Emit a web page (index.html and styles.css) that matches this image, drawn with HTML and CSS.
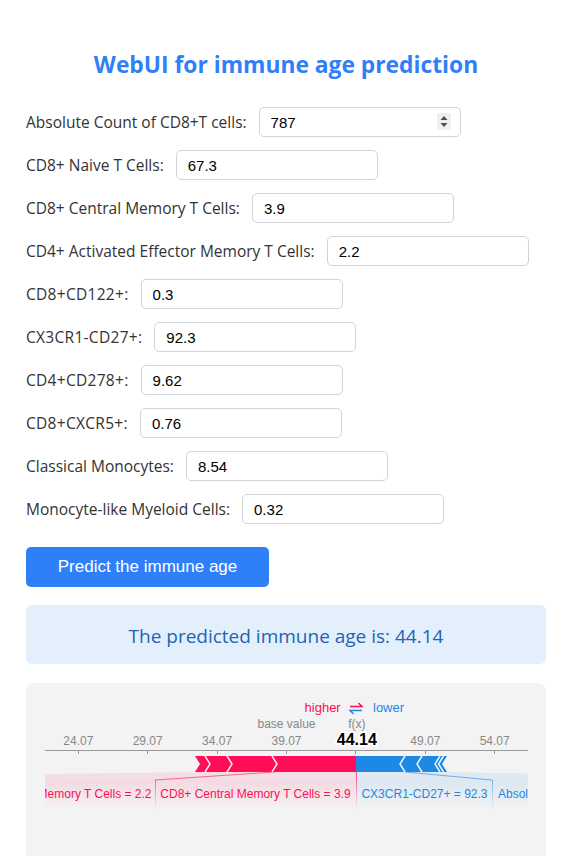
FILE: index.html
```html
<!DOCTYPE html>
<html lang="en">
<head>
<meta charset="utf-8">
<title>WebUI for immune age prediction</title>
<link rel="stylesheet" href="styles.css">
</head>
<body>
<main class="page">
  <h1 class="title">WebUI for immune age prediction</h1>
  <form class="form">
    <div class="row"><label class="label">Absolute Count of CD8+T cells:</label><div class="num"><input class="field" type="text" value="787"><svg class="spin" width="14" height="17" viewBox="0 0 14 17"><rect width="14" height="17" fill="#efefef"/><path d="M3.5 7 L7 3 L10.5 7 Z" fill="#505050"/><path d="M3.5 10 L10.5 10 L7 14 Z" fill="#505050"/></svg></div></div>
    <div class="row"><label class="label">CD8+ Naive T Cells:</label><input class="field" type="text" value="67.3"></div>
    <div class="row"><label class="label">CD8+ Central Memory T Cells:</label><input class="field" type="text" value="3.9"></div>
    <div class="row"><label class="label">CD4+ Activated Effector Memory T Cells:</label><input class="field" type="text" value="2.2"></div>
    <div class="row"><label class="label short">CD8+CD122+:</label><input class="field" type="text" value="0.3"></div>
    <div class="row"><label class="label short">CX3CR1-CD27+:</label><input class="field" type="text" value="92.3"></div>
    <div class="row"><label class="label short">CD4+CD278+:</label><input class="field" type="text" value="9.62"></div>
    <div class="row"><label class="label short">CD8+CXCR5+:</label><input class="field" type="text" value="0.76"></div>
    <div class="row"><label class="label">Classical Monocytes:</label><input class="field" type="text" value="8.54"></div>
    <div class="row"><label class="label">Monocyte-like Myeloid Cells:</label><input class="field" type="text" value="0.32"></div>
  </form>
  <button class="btn" type="button">Predict the immune age</button>
  <div class="result">The predicted immune age is: 44.14</div>
  <div class="plot">
    <svg class="force" width="520" height="173" viewBox="26 683 520 173" xmlns="http://www.w3.org/2000/svg" font-family="Liberation Sans, Arial, sans-serif">
      <defs>
        <linearGradient id="pinkFade" gradientUnits="userSpaceOnUse" x1="0" y1="779" x2="0" y2="809">
          <stop offset="0" stop-color="#ff0d57" stop-opacity="0.12"/>
          <stop offset="1" stop-color="#ff0d57" stop-opacity="0"/>
        </linearGradient>
        <linearGradient id="blueFade" gradientUnits="userSpaceOnUse" x1="0" y1="779" x2="0" y2="809">
          <stop offset="0" stop-color="#1e88e5" stop-opacity="0.12"/>
          <stop offset="1" stop-color="#1e88e5" stop-opacity="0"/>
        </linearGradient>
        <linearGradient id="pinkLine" gradientUnits="userSpaceOnUse" x1="0" y1="772" x2="0" y2="809">
          <stop offset="0" stop-color="#ff0d57" stop-opacity="0.7"/>
          <stop offset="1" stop-color="#ff0d57" stop-opacity="0"/>
        </linearGradient>
        <linearGradient id="blueLine" gradientUnits="userSpaceOnUse" x1="0" y1="772" x2="0" y2="809">
          <stop offset="0" stop-color="#1e88e5" stop-opacity="0.7"/>
          <stop offset="1" stop-color="#1e88e5" stop-opacity="0"/>
        </linearGradient>
        <clipPath id="plotClip"><rect x="45" y="683" width="483" height="173"/></clipPath>
      </defs>

      <text x="340.7" y="712" text-anchor="end" font-size="13" fill="#ff0d57">higher</text>
      <path d="M350 706.5 H362 L358.5 703" stroke="#ff0d57" stroke-width="1.5" fill="none"/>
      <path d="M362 710.5 H350 L353.5 714" stroke="#1e88e5" stroke-width="1.5" fill="none"/>
      <text x="373" y="712" font-size="13" fill="#1e88e5">lower</text>

      <text x="286.5" y="728" text-anchor="middle" font-size="12" fill="#888">base value</text>
      <text x="356.8" y="728" text-anchor="middle" font-size="12" fill="#888">f(x)</text>

      <line x1="45" x2="528" y1="750.5" y2="750.5" stroke="#999" stroke-width="1"/>
      <g stroke="#999" stroke-width="1">
        <line x1="78.5" x2="78.5" y1="750" y2="754"/>
        <line x1="147.5" x2="147.5" y1="750" y2="754"/>
        <line x1="217.5" x2="217.5" y1="750" y2="754"/>
        <line x1="286.5" x2="286.5" y1="750" y2="754"/>
        <line x1="355.5" x2="355.5" y1="750" y2="754"/>
        <line x1="425.5" x2="425.5" y1="750" y2="754"/>
        <line x1="494.5" x2="494.5" y1="750" y2="754"/>
      </g>
      <g font-size="12" fill="#888" text-anchor="middle">
        <text x="78.3" y="745">24.07</text>
        <text x="147.7" y="745">29.07</text>
        <text x="217.1" y="745">34.07</text>
        <text x="286.5" y="745">39.07</text>
        <text x="425.3" y="745">49.07</text>
        <text x="494.7" y="745">54.07</text>
      </g>
      <text x="356.8" y="745" text-anchor="middle" font-size="16" font-weight="bold" fill="#000" stroke="#fff" stroke-width="4" paint-order="stroke" stroke-linejoin="round">44.14</text>

      <g clip-path="url(#plotClip)">
        <g fill="#ff0d57" fill-opacity="0.09">
          <polygon points="275,772 356,772 356,780 155,780"/>
          <polygon points="229,772 275,772 155,780 -105,780"/>
          <polygon points="207,772 229,772 -105,780 -300,780"/>
          <polygon points="197,772 207,772 -300,780 -450,780"/>
        </g>
        <g fill="#1e88e5" fill-opacity="0.09">
          <polygon points="356,772 405,772 492,780 356,780"/>
          <polygon points="405,772 422,772 720,780 492,780"/>
          <polygon points="422,772 440,772 900,780 720,780"/>
        </g>
        <rect x="155" y="780" width="201" height="29" fill="url(#pinkFade)"/>
        <rect x="-105" y="780" width="260" height="29" fill="url(#pinkFade)"/>
        <rect x="356" y="780" width="136" height="29" fill="url(#blueFade)"/>
        <rect x="492" y="780" width="228" height="29" fill="url(#blueFade)"/>

        <path d="M275 772 L155 780" stroke="#ff0d57" stroke-opacity="0.6" stroke-width="1" fill="none"/>
        <path d="M155.5 780 V809" stroke="url(#pinkLine)" stroke-width="1" fill="none"/>
        <path d="M356.5 772 V809" stroke="url(#pinkLine)" stroke-width="1" fill="none"/>
        <path d="M405 772 L492 780" stroke="#1e88e5" stroke-opacity="0.6" stroke-width="1" fill="none"/>
        <path d="M492.5 780 V809" stroke="url(#blueLine)" stroke-width="1" fill="none"/>

        <g font-size="12">
          <text x="151.5" y="798" text-anchor="end" fill="#ff0d57">CD4+ Activated Effector Memory T Cells = 2.2</text>
          <text x="255.5" y="798" text-anchor="middle" fill="#ff0d57">CD8+ Central Memory T Cells = 3.9</text>
          <text x="424.5" y="798" text-anchor="middle" fill="#1e88e5">CX3CR1-CD27+ = 92.3</text>
          <text x="498" y="798" fill="#1e88e5">Absolute Count of CD8+T cells = 787</text>
        </g>
      </g>

      <polygon points="195,756 356,756 356,772 195,772 200,764" fill="#ff0d57"/>
      <g stroke="#fff" stroke-width="1.5" fill="none" stroke-opacity="0.9">
        <polyline points="205,756 210,764 205,772"/>
        <polyline points="227,756 232,764 227,772"/>
        <polyline points="272,756 277,764 272,772"/>
      </g>
      <polygon points="356,756 447,756 442,764 447,772 356,772" fill="#1e88e5"/>
      <g stroke="#fff" stroke-width="1.5" fill="none" stroke-opacity="0.9">
        <polyline points="405,756 400,764 405,772"/>
        <polyline points="422,756 417,764 422,772"/>
        <polyline points="440,756 435,764 440,772"/>
        <polyline points="443.5,756 438.5,764 443.5,772"/>
      </g>
    </svg>
  </div>
</main>
</body>
</html>
```
FILE: styles.css
```css
* {
  box-sizing: border-box;
}

html,
body {
  margin: 0;
  background: #ffffff;
}

body {
  font-family: "Open Sans", "Noto Sans", sans-serif;
  color: #333333;
}

.page {
  width: 520px;
  margin-left: 26px;
  padding-top: 49px;
}

.title {
  margin: 0 0 26px;
  font-size: 22.8px;
  line-height: 32px;
  font-weight: 700;
  color: #2f80f8;
  text-align: center;
}

.form {
  display: flex;
  flex-direction: column;
  gap: 13px;
}

.row {
  display: flex;
  align-items: center;
  gap: 12px;
  height: 30px;
}

.label {
  font-size: 15.5px;
  color: #333333;
  white-space: nowrap;
}

.label.short {
  letter-spacing: 0.3px;
}

.field {
  width: 202px;
  height: 30px;
  margin: 0;
  border: 1px solid #ced4da;
  border-radius: 5px;
  padding: 0 11px;
  font: 15px "Liberation Sans", Arial, sans-serif;
  color: #000000;
  background: #ffffff;
  outline: none;
}

.num {
  position: relative;
  display: flex;
}

.spin {
  position: absolute;
  right: 10px;
  top: 6px;
}

.btn {
  display: block;
  margin-top: 23px;
  width: 243px;
  height: 40px;
  padding: 0;
  border: 0;
  border-radius: 5px;
  background: #2f80f8;
  color: #ffffff;
  font: 17px "Liberation Sans", Arial, sans-serif;
}

.result {
  margin-top: 18px;
  height: 59px;
  padding-top: 2px;
  border-radius: 6px;
  background: #e3f0fc;
  color: #2463b5;
  font-size: 19px;
  display: flex;
  align-items: center;
  justify-content: center;
}

.plot {
  margin-top: 19px;
  height: 173px;
  background: #f3f3f3;
  border-radius: 8px 8px 0 0;
  overflow: hidden;
}

.force {
  display: block;
}
```
